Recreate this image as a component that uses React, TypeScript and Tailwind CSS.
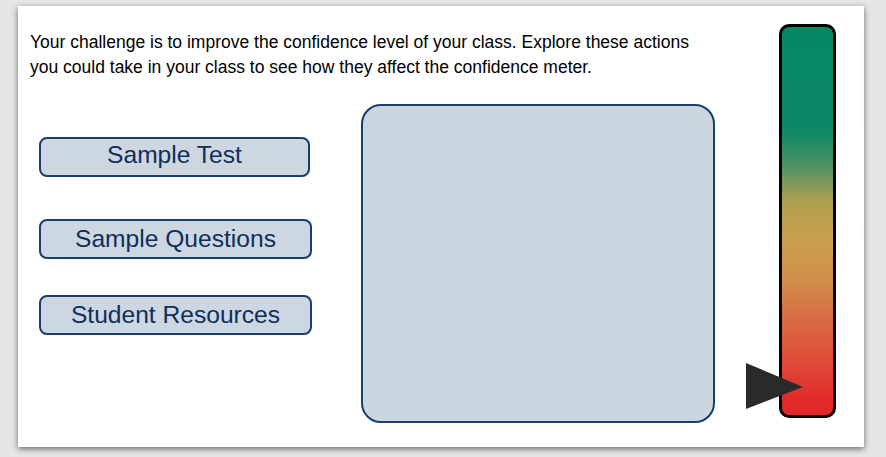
import React from "react";

export default function App() {
  const btn =
    "h-[40px] rounded-[8px] border-2 border-[#17406e] bg-[#cdd7e1] text-[#0f2e5a] text-[24.6px] leading-none flex items-center justify-center";
  return (
    <div
      className="w-[886px] h-[457px] bg-[#e6e6e6] pt-[6px] pl-[18px] overflow-hidden"
      style={{ fontFamily: '"Liberation Sans", Arial, sans-serif' }}
    >
      <div className="relative flex w-[846px] h-[441px] bg-white shadow-[0_2px_6px_rgba(0,0,0,0.55)]">
        <div className="flex-1 pl-[12px] pt-[24px]">
          <p className="text-[17.5px] leading-[25px] text-black whitespace-nowrap">
            Your challenge is to improve the confidence level of your class. Explore these actions
            <br />
            you could take in your class to see how they affect the confidence meter.
          </p>
          <div className="flex mt-[24px]">
            <div className="flex flex-col ml-[9px] mt-[33px] w-[273px]">
              <div className={btn + " w-[271px] pb-[3px]"}>Sample Test</div>
              <div className={btn + " mt-[42px] pt-[1px]"}>Sample Questions</div>
              <div className={btn + " mt-[36px] h-[39px] pt-[1px]"}>Student Resources</div>
            </div>
            <div className="ml-[49px] w-[354px] h-[319px] rounded-[20px] border-2 border-[#17406e] bg-[#ccd6e0]" />
          </div>
        </div>
        <div className="mt-[18px] mr-[28px] w-[57px] h-[394px] rounded-[10px] border-[3px] border-black bg-[linear-gradient(to_bottom,#078766_0%,#0b8866_25%,#1a8a66_29%,#5a9460_37%,#b0a050_45%,#c8a04c_55%,#d0904a_65%,#d86c44_75%,#de4c38_86%,#e22828_97%)]" />
        <svg
          className="absolute left-[728px] top-[357px]"
          width="57"
          height="46"
          viewBox="0 0 57 46"
        >
          <polygon points="0,0 57,24 0,46" fill="#2a2a2a" />
        </svg>
      </div>
    </div>
  );
}
